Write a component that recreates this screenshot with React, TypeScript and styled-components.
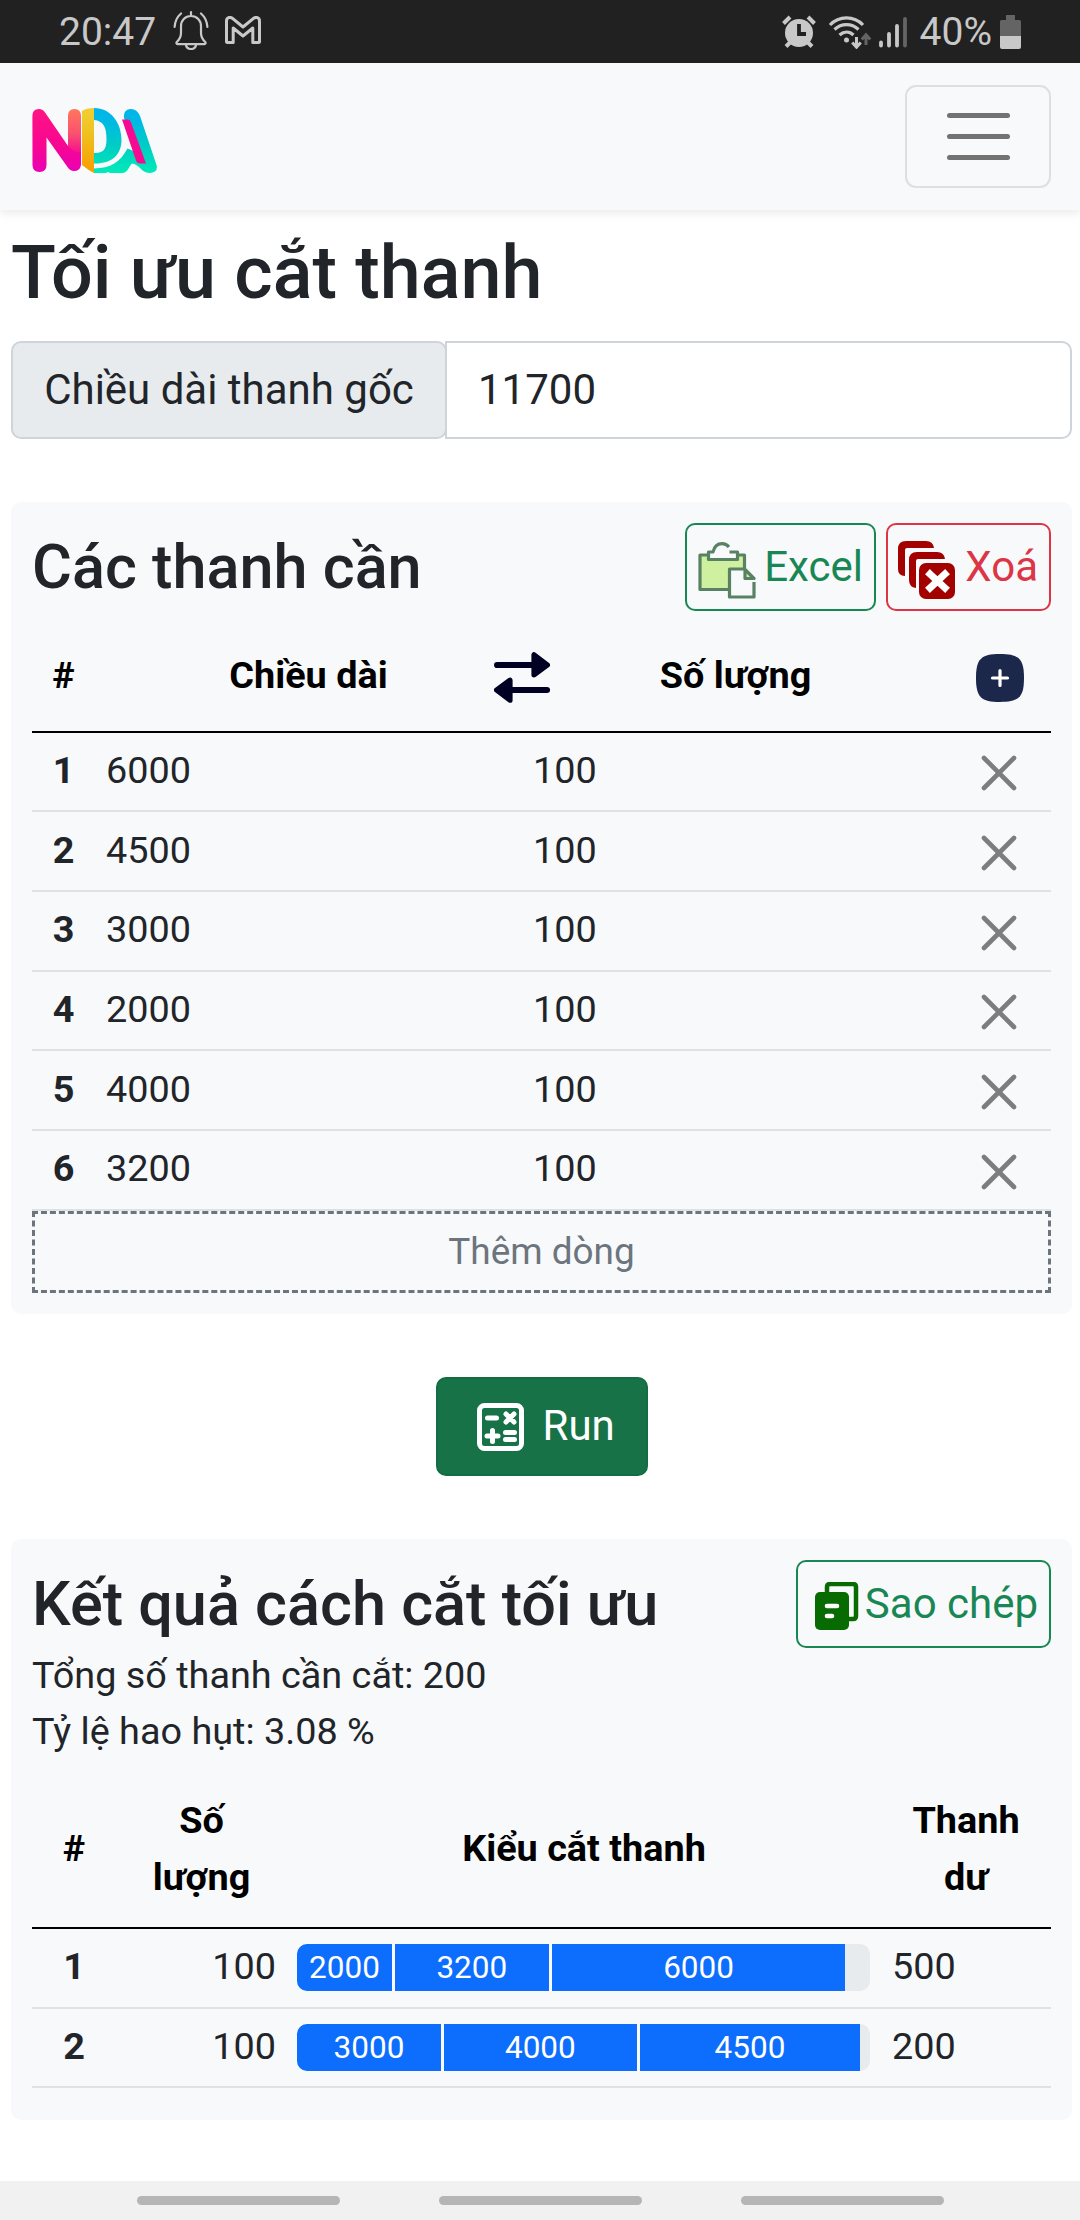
import React from "react";
import styled, { createGlobalStyle } from "styled-components";

const GlobalStyle = createGlobalStyle`
  *, *::before, *::after { box-sizing: border-box; }
  body {
    margin: 0;
    background: #fff;
    color: #212529;
    font-family: Roboto, "Noto Sans", sans-serif;
    font-size: 37.8px;
    line-height: 57px;
  }
`;

const Screen = styled.div`
  display: flex;
  flex-direction: column;
  width: 1080px;
  height: 2220px;
  overflow: hidden;
`;

const StatusBar = styled.div`
  display: flex;
  align-items: center;
  flex: none;
  height: 63px;
  padding: 2px 58px 0 59px;
  background: #212121;
  color: #c8c8c8;
  font-size: 39px;
  line-height: 63px;
`;
const StatusGroup = styled.div`
  display: flex;
  align-items: center;
  height: 63px;
`;
const Spacer = styled.div`
  flex: 1;
`;
const Icon = styled.svg<{ $ml?: number; $mt?: number }>`
  display: block;
  flex: none;
  margin-left: ${(p) => p.$ml ?? 0}px;
  margin-top: ${(p) => p.$mt ?? 0}px;
`;
const Battery = styled.span`
  margin-left: 12px;
`;

const Navbar = styled.nav`
  display: flex;
  align-items: center;
  justify-content: space-between;
  flex: none;
  height: 147px;
  padding: 0 29px 0 32px;
  background: #f8f9fb;
  box-shadow: 0 4px 8px rgba(0, 0, 0, 0.075);
`;
const Toggler = styled.button`
  display: flex;
  flex-direction: column;
  align-items: center;
  justify-content: center;
  gap: 16px;
  width: 146px;
  height: 103px;
  padding: 0;
  border: 2px solid #dedfe1;
  border-radius: 11px;
  background: transparent;
`;
const TogglerLine = styled.span`
  width: 63px;
  height: 5.3px;
  border-radius: 3px;
  background: #727272;
`;

const Main = styled.main`
  display: flex;
  flex-direction: column;
  flex: 1;
  padding: 19px 8px 0 11px;
`;
const PageTitle = styled.h1`
  margin: 0;
  font-size: 73.7px;
  line-height: 89px;
  font-weight: 500;
`;
const InputGroup = styled.div`
  display: flex;
  flex: none;
  width: 1061px;
  height: 98px;
  margin-top: 23px;
  font-size: 42px;
`;
const InputLabel = styled.label`
  display: flex;
  align-items: center;
  justify-content: center;
  width: 436px;
  padding-bottom: 2px;
  border: 2px solid #ced4da;
  border-radius: 10px;
  background: #e8ebee;
`;
const Input = styled.input`
  flex: 1;
  min-width: 0;
  margin-left: -2px;
  padding: 0 31px 1px;
  border: 2px solid #ced4da;
  border-radius: 0 10px 10px 0;
  background: #fff;
  color: inherit;
  font: inherit;
`;

const Card = styled.section<{ $height: number; $top: number }>`
  display: flex;
  flex-direction: column;
  flex: none;
  width: 1061px;
  height: ${(p) => p.$height}px;
  margin-top: ${(p) => p.$top}px;
  padding: 21px;
  border-radius: 10px;
  background: #f8f9fb;
`;
const CardHead = styled.div`
  display: flex;
  flex: none;
  gap: 10px;
  height: 88px;
`;
const CardTitle = styled.h2`
  flex: 1;
  margin: 0;
  font-size: 61.2px;
  line-height: 88px;
  font-weight: 500;
  white-space: nowrap;
`;
const OutlineButton = styled.button<{ $color: string; $width: number }>`
  display: flex;
  align-items: center;
  justify-content: space-between;
  width: ${(p) => p.$width}px;
  height: 88px;
  padding: 0 11px 0 10px;
  border: 2px solid ${(p) => p.$color};
  border-radius: 10px;
  background: transparent;
  color: ${(p) => p.$color};
  font: inherit;
  font-size: 42px;
  white-space: nowrap;
`;
const ButtonText = styled.span`
  padding-bottom: 2px;
`;

const Table = styled.table`
  flex: none;
  width: 1019px;
  border-collapse: separate;
  border-spacing: 0;
  table-layout: fixed;
`;
const Col = styled.col<{ $w: number }>`
  width: ${(p) => p.$w}px;
`;
const HeadCell = styled.th<{ $height: number; $pad?: string }>`
  height: ${(p) => p.$height}px;
  padding: ${(p) => p.$pad ?? "0 21px"};
  border-bottom: 2px solid #000;
  color: #000;
  font-weight: 700;
  text-align: center;
`;
const HeadInner = styled.div`
  display: flex;
  align-items: center;
  justify-content: center;
`;
const Cell = styled.td<{ $align?: string; $pad?: string }>`
  height: 79.7px;
  padding: ${(p) => p.$pad ?? "0 0 2px 11px"};
  border-bottom: 2px solid #dee2e6;
  text-align: ${(p) => p.$align ?? "left"};
`;
const IndexCell = styled(Cell).attrs({ as: "th", scope: "row" })`
  padding: 0 0 2px;
  font-weight: 700;
  text-align: center;
`;
const AddRow = styled.button`
  flex: none;
  width: 1019px;
  height: 82px;
  padding: 0 0 1px;
  border: 3px dashed #6c757d;
  background: transparent;
  color: #6c757d;
  font: inherit;
  font-size: 36.9px;
  line-height: 75px;
`;
const RunButton = styled.button`
  display: flex;
  align-items: center;
  align-self: center;
  flex: none;
  gap: 19px;
  width: 212px;
  height: 99px;
  margin-top: 63px;
  padding: 0 0 0 39px;
  border: 2px solid #146c43;
  border-radius: 10px;
  background: #177347;
  color: #fff;
  font: inherit;
  font-size: 42px;
`;
const Summary = styled.p`
  margin: 0;
  height: 56px;
  line-height: 56px;
`;
const SummaryBlock = styled.div`
  flex: none;
  height: 130px;
  margin-top: -1px;
  margin-bottom: 1px;
`;
const Progress = styled.div`
  display: flex;
  width: 573px;
  height: 47px;
  border-radius: 10px;
  overflow: hidden;
  background: #e8ebee;
  color: #fff;
  font-size: 31.5px;
  line-height: 47px;
`;
const Segment = styled.div`
  flex: none;
  border-right: 3px solid #f8f9fb;
  text-align: center;
  background: #0d6efd;
  &:last-child { border-right: 0; }
`;
const SystemNav = styled.div`
  display: flex;
  align-items: center;
  justify-content: center;
  flex: none;
  gap: 99px;
  height: 39px;
  background: #f1f1f1;
`;
const Pill = styled.span`
  width: 203px;
  height: 9px;
  border-radius: 5px;
  background: #b5b5b5;
`;

const BellIcon = () => (
  <Icon $ml={17} $mt={-5} width="36" height="40" viewBox="0 0 36 40" fill="none" stroke="#c8c8c8" strokeWidth="2.2" strokeLinecap="round" strokeLinejoin="round">
    <path d="M18 2v4M18 6c-6 0-10 4.500-10 10v7c0 4-1.500 6.500-4.200 9-.8 1-.4 2.200.8 2.200h26.800c1.200 0 1.600-1.200.8-2.200C29.500 29.500 28 27 28 23v-7c0-5.500-4-10-10-10z" />
    <path d="M13 35c.5 3 2.500 4 5 4s4.500-1 5-4M8 3.500C4 7 2 11 1.600 17M28 3.500c4 3.500 6 7.500 6.400 13.500" />
  </Icon>
);
const MailIcon = () => (
  <Icon $ml={16} $mt={-5} width="36" height="28" viewBox="0 0 36 28" fill="none" stroke="#c8c8c8" strokeWidth="3" strokeLinejoin="round">
    <path d="M1.500 5c0-3.500 3.500-4.500 6-2.700L18 11l10.500-8.700c2.500-1.800 6-.8 6 2.700v20.500c0 .6-.4 1-1 1h-5.700V12L18 20 8.200 12v14.500H2.500c-.6 0-1-.4-1-1z" />
  </Icon>
);
const AlarmIcon = () => (
  <Icon $mt={-2} width="34" height="33" viewBox="0 0 34 33">
    <g stroke="#c8c8c8" strokeWidth="4">
      <path d="M1.500 8.500L8 2M32.500 8.500L26 2M4 31.500l5-5M30 31.500l-5-5" />
    </g>
    <circle cx="17" cy="18" r="14" fill="#c8c8c8" />
    <path d="M17 9v10h7" fill="none" stroke="#212121" strokeWidth="3.800" />
  </Icon>
);
const WifiIcon = () => (
  <Icon $ml={12} $mt={-2} width="44" height="34" viewBox="0 0 44 34" fill="none" stroke="#c8c8c8" strokeWidth="3.200">
    <path d="M2 10c9-9.500 24-9.500 33 0M6.500 14.500c7-6.500 17-6.500 24 0M11.500 20c4.500-4 10-4 14 0" />
    <circle cx="18.500" cy="25" r="2.500" fill="#c8c8c8" stroke="none" />
    <path d="M28.500 22v10M24.300 27.500l4.200 4.700 4.200-4.700" strokeWidth="3" />
    <path d="M38 30V20M33.800 24.500l4.200-4.700 4.200 4.700" stroke="#646464" strokeWidth="3" />
  </Icon>
);
const SignalIcon = () => (
  <Icon $ml={6} $mt={-2} width="30" height="32" viewBox="0 0 30 32" strokeWidth="3.800" strokeLinecap="round" stroke="#c8c8c8">
    <path d="M3 26.500v3M11 18v11.500M19 10v19.500" />
    <path d="M27 3v26.500" stroke="#646464" />
  </Icon>
);
const BatteryIcon = () => (
  <Icon $ml={8} $mt={-2} width="22" height="34" viewBox="0 0 22 34">
    <path d="M6 0h9v5h4.500q1.500 0 1.500 1.500V22H0V6.500Q0 5 1.500 5H6z" fill="#646464" />
    <path d="M0 21h21v11q0 2-2 2H2q-2 0-2-2z" fill="#c8c8c8" />
  </Icon>
);

const Logo = () => (
  <Icon $mt={8} width="126" height="68" viewBox="32 107 126 68" fill="none" strokeLinecap="round" strokeLinejoin="round">
    <defs>
      <linearGradient id="pink" x1="0" y1="109" x2="0" y2="172" gradientUnits="userSpaceOnUse">
        <stop stopColor="#ff1383" /><stop offset=".6" stopColor="#f70693" /><stop offset="1" stopColor="#e900b4" />
      </linearGradient>
      <linearGradient id="coral" x1="0" y1="109" x2="0" y2="157" gradientUnits="userSpaceOnUse">
        <stop stopColor="#ff765c" /><stop offset=".5" stopColor="#fb536f" /><stop offset="1" stopColor="#f50095" />
      </linearGradient>
      <linearGradient id="gold" x1="0" y1="108" x2="0" y2="173" gradientUnits="userSpaceOnUse">
        <stop stopColor="#f2cf35" /><stop offset=".4" stopColor="#eec11f" /><stop offset="1" stopColor="#f99b00" />
      </linearGradient>
      <linearGradient id="aqua" x1="0" y1="108" x2="0" y2="173" gradientUnits="userSpaceOnUse">
        <stop stopColor="#00b5eb" /><stop offset=".2" stopColor="#00b8e4" /><stop offset=".6" stopColor="#00cec3" /><stop offset="1" stopColor="#00ebb9" />
      </linearGradient>
    </defs>
    <path d="M32.400 116q0-7 6.500-7 4 0 6.500 4L68 146q6-3 13-14v33q-1 6-7 6-4 0-6.500-4L46.500 137.500V165q0 7-7 7t-7-7z" fill="url(#pink)" />
    <path d="M68 116q0-7 6.500-7t6.500 7v36q-6 2-13-6z" fill="url(#coral)" />
    <path d="M82 111q4-3 12-3v65q-6-3-12-8z" fill="url(#gold)" />
    <path d="M94 108c17 0 27.500 15 27.500 32 0 15-10 24-27.500 23.500v-10.500c9 .3 12.500-3 12.500-14 0-12-3-18-12.500-19z" fill="url(#aqua)" />
    <path d="M94 168.500c17-.5 26-6 33.500-20l6 2.500 7 11 4.500 1L124 118q-1-8 6-9 7-.5 10 7l16.500 49q2 7-6 8-6 0-9.500-4-4.500-5-9-5.500c-4 4-4 9.500-10 9.500h-12l-2-1-2 1H94z" fill="url(#aqua)" />
    <path d="M122 119.500h6q2 0 3 3l15 41h-6q-3 0-4-3z" fill="#f60a91" />
  </Icon>
);

const ClipboardIcon = () => (
  <Icon $ml={1} $mt={5} width="58" height="58" viewBox="0 0 58 58" fill="none" stroke="#598265" strokeWidth="3.200" strokeLinejoin="round">
    <path d="M12 14H2v34.500h44.500V14H37" fill="#cff09e" />
    <path d="M10.500 18.500v-7H15c1-4 4-8 9-8s7 2 8 4.500L32 11.500h8v7z" fill="#f8f9fb" stroke="none" />
    <path d="M31 6C29 3.500 27 2.600 24 2.600c-5 0-8 4-9 8.400h-4.500v7.500H39.500v-7.500h-8" />
    <path d="M47 28H31.500v28H56V41L54 37.500z" fill="#f8f9fb" stroke="none" />
    <path d="M47 28H31.500v28H56V41" />
    <path d="M47 28.500l9 9h-9z" fill="#cff09e" />
  </Icon>
);
const DeleteStackIcon = () => (
  <Icon $mt={5} width="57" height="58" viewBox="0 0 57 58" fill="#a30000">
    <path d="M8 0h20q7 0 8 7H9q-2 0-2 2v26Q0 35 0 28V8q0-8 8-8z" />
    <path d="M19 11h20q7 0 8 7H20q-2 0-2 2v27q-7-1-7-8V19q0-8 8-8z" />
    <rect x="21" y="22" width="36" height="36" rx="7" />
    <path d="M32 33l15 14M47 33L32 47" stroke="#fff" strokeWidth="7" strokeLinecap="square" />
  </Icon>
);
const CopyIcon = () => (
  <Icon $ml={7} $mt={4} width="44" height="48" viewBox="0 0 44 48">
    <path d="M12 12V5q0-3 3-3h23q3 0 3 3v29q0 3-3 3h-6" fill="none" stroke="#086b02" strokeWidth="4.500" />
    <rect y="10" width="34" height="38" rx="5" fill="#086b02" />
    <path d="M12 24h10M12 34h5" stroke="#fff" strokeWidth="4.600" strokeLinecap="round" />
  </Icon>
);
const SwapIcon = () => (
  <Icon width="56" height="51" viewBox="0 0 56 51" fill="#000023" stroke="#000023" strokeLinejoin="round" strokeLinecap="round">
    <path d="M3.100 13h40M13 38h40" strokeWidth="6.200" />
    <path d="M40 2.800v20L53.500 13zM16 28.200v20L2.500 38z" strokeWidth="5.200" />
  </Icon>
);
const PlusIcon = () => (
  <Icon width="48" height="48" viewBox="0 0 48 48">
    <path d="M24 0C43 0 48 5 48 24S43 48 24 48 0 43 0 24 5 0 24 0z" fill="#1c274c" />
    <path d="M24 16.500v15M16.500 24h15" stroke="#fff" strokeWidth="3.200" strokeLinecap="round" />
  </Icon>
);
const CloseIcon = () => (
  <Icon $ml={5} $mt={4} width="36" height="36" viewBox="0 0 36 36" stroke="#7d7d7d" strokeWidth="4.600" strokeLinecap="round">
    <path d="M3 3l30 30M33 3L3 33" />
  </Icon>
);
const CalcIcon = () => (
  <Icon width="47" height="48" viewBox="0 0 47 48" fill="none" stroke="#fff" strokeLinecap="round">
    <rect x="2.500" y="2.500" width="42" height="43" rx="5" strokeWidth="5" />
    <path d="M10.500 15h9M29 11l8 8M37 11l-8 8M10 33h11M15.500 27.500v11M28.500 29.500h9M28.500 36.500h9" strokeWidth="5" />
  </Icon>
);

const bars = [6000, 4500, 3000, 2000, 4000, 3200].map((length) => ({ length, quantity: 100 }));
const STOCK = 11700;
const patterns = [
  { quantity: 100, cuts: [2000, 3200, 6000], rest: 500 },
  { quantity: 100, cuts: [3000, 4000, 4500], rest: 200 },
];

export default function App() {
  return (
    <Screen>
      <GlobalStyle />
      <StatusBar>
        <StatusGroup>20:47<BellIcon /><MailIcon /></StatusGroup>
        <Spacer />
        <StatusGroup>
          <AlarmIcon /><WifiIcon /><SignalIcon /><Battery>40%</Battery><BatteryIcon />
        </StatusGroup>
      </StatusBar>
      <Navbar>
        <Logo />
        <Toggler aria-label="Menu"><TogglerLine /><TogglerLine /><TogglerLine /></Toggler>
      </Navbar>
      <Main>
        <PageTitle>Tối ưu cắt thanh</PageTitle>
        <InputGroup>
          <InputLabel htmlFor="stock">Chiều dài thanh gốc</InputLabel>
          <Input id="stock" defaultValue={STOCK} />
        </InputGroup>

        <Card $height={812} $top={63}>
          <CardHead>
            <CardTitle>Các thanh cần</CardTitle>
            <OutlineButton $color="#198754" $width={191}><ClipboardIcon /><ButtonText>Excel</ButtonText></OutlineButton>
            <OutlineButton $color="#dc3545" $width={165}><DeleteStackIcon /><ButtonText>Xoá</ButtonText></OutlineButton>
          </CardHead>
          <Table>
            <colgroup><Col $w={63} /><Col $w={399} /><Col $w={56} /><Col $w={399} /><Col $w={102} /></colgroup>
            <thead>
              <tr>
                <HeadCell $height={121.500} $pad="9px 0 0">#</HeadCell>
                <HeadCell $height={121.500} $pad="9px 0 0 28px">Chiều dài</HeadCell>
                <HeadCell $height={121.500} $pad="14px 0 0"><HeadInner><SwapIcon /></HeadInner></HeadCell>
                <HeadCell $height={121.500} $pad="9px 28px 0 0">Số lượng</HeadCell>
                <HeadCell $height={121.500} $pad="14px 0 0"><HeadInner><PlusIcon /></HeadInner></HeadCell>
              </tr>
            </thead>
            <tbody>
              {bars.map((bar, i) => (
                <tr key={bar.length}>
                  <IndexCell>{i + 1}</IndexCell>
                  <Cell>{bar.length}</Cell>
                  <Cell colSpan={2} $pad="0 0 2px 39px">{bar.quantity}</Cell>
                  <Cell $pad="0 0 0 27px"><CloseIcon /></Cell>
                </tr>
              ))}
            </tbody>
          </Table>
          <AddRow>Thêm dòng</AddRow>
        </Card>

        <RunButton><CalcIcon /><ButtonText>Run</ButtonText></RunButton>

        <Card $height={581} $top={63}>
          <CardHead>
            <CardTitle>Kết quả cách cắt tối ưu</CardTitle>
            <OutlineButton $color="#198754" $width={255}><CopyIcon /><ButtonText>Sao chép</ButtonText></OutlineButton>
          </CardHead>
          <SummaryBlock>
            <Summary>Tổng số thanh cần cắt: 200</Summary>
            <Summary>Tỷ lệ hao hụt: 3.08 %</Summary>
          </SummaryBlock>
          <Table>
            <colgroup><Col $w={84} /><Col $w={171} /><Col $w={594} /><Col $w={170} /></colgroup>
            <thead>
              <tr>
                <HeadCell $height={151} $pad="0 0 8px">#</HeadCell>
                <HeadCell $height={151} $pad="0 21px 8px">Số lượng</HeadCell>
                <HeadCell $height={151} $pad="0 21px 8px">Kiểu cắt thanh</HeadCell>
                <HeadCell $height={151} $pad="0 21px 8px">Thanh dư</HeadCell>
              </tr>
            </thead>
            <tbody>
              {patterns.map((pattern, i) => (
                <tr key={i}>
                  <IndexCell>{i + 1}</IndexCell>
                  <Cell $align="right" $pad="0 11px 2px 0">{pattern.quantity}</Cell>
                  <Cell $pad="0 10px">
                    <Progress>
                      {pattern.cuts.map((cut) => (
                        <Segment key={cut} style={{ width: `${(cut / STOCK) * 100}%` }}>{cut}</Segment>
                      ))}
                    </Progress>
                  </Cell>
                  <Cell>{pattern.rest}</Cell>
                </tr>
              ))}
            </tbody>
          </Table>
        </Card>
      </Main>
      <SystemNav><Pill /><Pill /><Pill /></SystemNav>
    </Screen>
  );
}
